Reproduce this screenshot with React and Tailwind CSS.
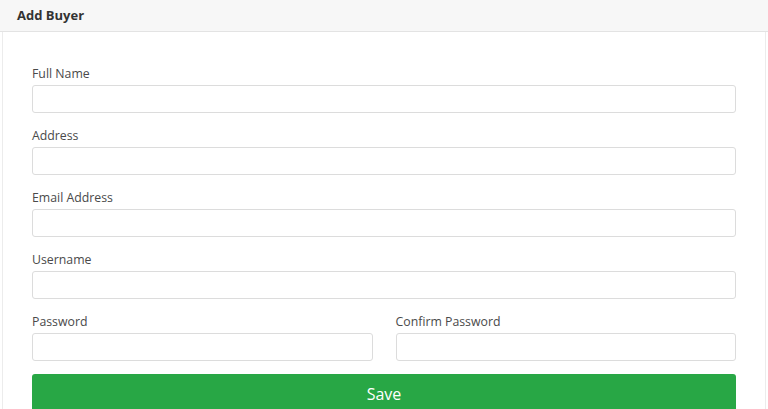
import React from "react";

const Field = ({ label, type = "text" }) => (
  <div className="mb-[13px] flex flex-col">
    <label className="mb-[2px] text-[12.3px] leading-[19px] text-[#4a4a4a]">{label}</label>
    <input
      type={type}
      className="h-[28px] w-full rounded-[3px] border border-[#dcdcdc] bg-white px-2 text-[13px] focus:outline-none"
    />
  </div>
);

const App = () => {
  return (
    <div className="h-[409px] w-[768px] overflow-hidden bg-white font-['Open_Sans',sans-serif]">
      {/* Header */}
      <div className="flex h-[32px] items-center border-b border-[#e3e3e3] bg-[#f7f7f7] pl-[17px]">
        <h3 className="text-[13px] font-bold text-[#333]">Add Buyer</h3>
      </div>

      {/* Body */}
      <div className="mx-[2px] border-x border-[#ececec] px-[29px] pt-[32px]">
        <Field label="Full Name" />
        <Field label="Address" />
        <Field label="Email Address" type="email" />
        <Field label="Username" />
        <div className="grid grid-cols-2 gap-[23px]">
          <Field label="Password" type="password" />
          <Field label="Confirm Password" type="password" />
        </div>
        <button className="h-[40px] w-full rounded-[3px] bg-[#28a745] text-[16px] text-white">
          Save
        </button>
      </div>
    </div>
  );
};

export default App;
